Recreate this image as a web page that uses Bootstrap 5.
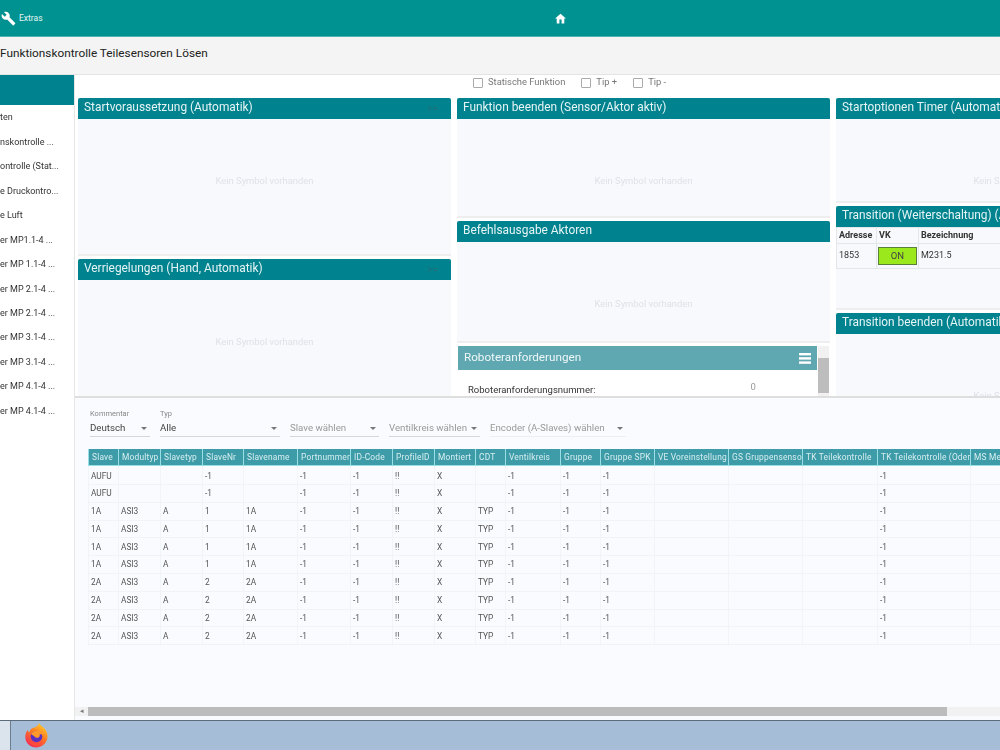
<!DOCTYPE html>
<html lang="de">
<head>
    <meta charset="UTF-8">
    <meta name="viewport" content="width=device-width, initial-scale=1">
    <title>Funktionskontrolle</title>
    <link href="https://cdn.jsdelivr.net/npm/bootstrap@5.3.0/dist/css/bootstrap.min.css" rel="stylesheet">
    <style>
        html, body {
            height: 750px;
            overflow: hidden;
        }
        body {
            font-family: Roboto, "Liberation Sans", sans-serif;
            background: #fff;
            color: #333;
            font-variant-ligatures: none;
        }
        .top-bar {
            height: 37px;
            background: #009290;
            border-bottom: 1px solid #4fb3b1;
            color: #e4f4f3;
            font-size: 8.5px;
        }
        .top-left {
            width: 500px;
            padding-left: 1px;
            gap: 3px;
        }
        .home-wrap {
            width: 121px;
            text-align: center;
        }
        .title-bar {
            height: 38px;
            background: #f4f4f4;
            border-bottom: 1px solid #e4e4e4;
            font-size: 11.8px;
            color: #222;
            padding-bottom: 4px;
        }
        .page-body {
            height: 645px;
            will-change: transform;
        }
        .side-col {
            width: 75px;
            flex-shrink: 0;
            border-right: 1px solid #e6e6e6;
            overflow: hidden;
        }
        .side-head {
            height: 30px;
            background: #00838f;
            margin-bottom: 1px;
        }
        .side-item {
            height: 24.45px;
            font-size: 9px;
            white-space: nowrap;
            color: #333;
        }
        .main-col {
            min-width: 0;
            flex: 1;
        }
        .upper-area {
            height: 323px;
            overflow: hidden;
            border-bottom: 2px solid #dedede;
        }
        .check-row {
            height: 23px;
            padding: 0 0 8px 398px;
            font-size: 9.4px;
            color: #777;
        }
        .check-row .form-check-input {
            width: 10px;
            height: 10px;
            margin: 0 5px 0 0;
            border-radius: 1px;
            border-color: #aaa;
        }
        .check-row span {
            margin-right: 16px;
        }
        .panel-cols {
            padding-left: 3px;
            gap: 6px;
            width: 1200px;
        }
        .panel-col {
            width: 373px;
            flex-shrink: 0;
        }
        .tile {
            background: #f8f9fd;
            border-bottom: 2px solid #eeeeee;
            margin-bottom: 3px;
            overflow: hidden;
        }
        .tile-h158 { height: 158px; }
        .tile-h120 { height: 120px; }
        .tile-h122 { height: 122px; }
        .tile-h105 { height: 105px; }
        .tile-h104 { height: 104px; }
        .tile-head {
            height: 21px;
            background: #00838f;
            color: #e6f4f5;
            font-size: 11.9px;
            padding: 0 6px 1px;
            border-radius: 2px 2px 0 0;
            white-space: nowrap;
        }
        .tile-op {
            color: #1d6f7a;
            font-size: 10px;
            margin-right: 7px;
        }
        .no-symbol {
            color: #dfe1e6;
            font-size: 9.4px;
            line-height: 12px;
            padding-top: 56px;
            text-align: center;
        }
        .robot-tile {
            background: #fff;
            height: 51px;
            overflow: hidden;
        }
        .robot-main {
            width: 359px;
            margin-left: 1px;
        }
        .robot-head {
            height: 24px;
            background: #60a8b1;
            color: #eef7f8;
            font-size: 11.7px;
            padding: 0 6px;
        }
        .robot-row {
            font-size: 9.5px;
            color: #333;
            padding: 13px 0 0 10px;
        }
        .robot-val {
            margin-left: 155px;
            margin-top: -3px;
            color: #999;
        }
        .robot-scroll {
            width: 11px;
            margin-left: 1px;
            background: #f1f1f1;
            padding-top: 12px;
        }
        .robot-thumb {
            height: 35px;
            background: #bdbdbd;
        }
        .vk-table {
            table-layout: fixed;
            width: 373px;
            margin: 0;
            font-size: 9px;
            --bs-table-bg: transparent;
            color: #333;
        }
        .vk-table th, .vk-table td {
            padding: 0 2px;
            border: 1px solid #e4e7ea;
            vertical-align: middle;
        }
        .vk-table th { height: 16px; font-weight: 700; }
        .vk-table td { height: 25px; }
        .vk-adr { width: 40px; }
        .vk-state { width: 42px; }
        .vk-on {
            background: #9be81d;
            border: 1px solid #58803a;
            color: #444;
            font-size: 9.5px;
            height: 18px;
            width: 39px;
            line-height: 16px;
            text-align: center;
            margin-left: -1px;
        }
        .lower-area {
            height: 322px;
            background: #fafbfe;
            overflow: hidden;
        }
        .filter-row {
            padding: 10px 0 0 15px;
            gap: 10px;
            height: 50px;
        }
        .filter-box {
            flex-shrink: 0;
        }
        .filter-label {
            font-size: 7.5px;
            height: 12px;
            line-height: 12px;
            color: #888;
        }
        .filter-sel {
            height: 17px;
            font-size: 9.7px;
            color: #444;
            white-space: nowrap;
            border-bottom: 1px solid #d6d6d6;
        }
        .filter-off { color: #999; }
        .filter-none { border-bottom-color: #eeeeee; }
        .caret-down {
            width: 0;
            height: 0;
            border-left: 3px solid transparent;
            border-right: 3px solid transparent;
            border-top: 3px solid #777;
            margin-right: 3px;
        }
        .f-w60 { width: 60px; }
        .f-w120 { width: 120px; }
        .f-w89 { width: 89px; }
        .f-w91 { width: 91px; }
        .f-w136 { width: 136px; }
        .data-wrap {
            padding: 1px 0 0 13px;
            height: 259px;
            overflow: hidden;
        }
        .data-table {
            table-layout: fixed;
            border-collapse: separate;
            border-spacing: 0;
            font-size: 8.3px;
            margin: 0;
            --bs-table-bg: transparent;
        }
        .data-table th {
            background: #3d9ca8;
            color: #d8eef0;
            font-weight: 400;
            font-size: 8.4px;
            height: 17px;
            padding: 0 1px 0 3px;
            vertical-align: middle;
            border-left: 1px solid #9adfe4;
            border-bottom: 1px solid #9adfe4;
            overflow: hidden;
            white-space: nowrap;
            letter-spacing: .2px;
        }
        .data-table td {
            height: 17.8px;
            padding: 0 2px;
            vertical-align: middle;
            color: #555;
            border-left: 1px solid #f2f5f8;
            border-bottom: 1px solid #f0f3f7;
            white-space: nowrap;
            overflow: hidden;
        }
        .data-table tbody tr:first-child td {
            height: 19px;
            padding-top: 2px;
        }
        .h-scroll {
            height: 9px;
            background: #f1f1f1;
        }
        .h-arrow {
            width: 13px;
            font-size: 7px;
            color: #777;
            line-height: 9px;
            text-align: center;
        }
        .h-thumb {
            width: 859px;
            background: #bcbcbc;
        }
        .task-bar {
            height: 30px;
            background: #a6bdd8;
            border-top: 1px solid #5c6b7c;
        }
        .task-start {
            width: 11px;
            background: #dbe3ec;
            border-right: 1px solid #6d7d8f;
        }
        .task-fox {
            margin-left: 13px;
            margin-top: 1px;
        }
    </style>
</head>
<body>

    <!-- Top bar -->
    <div class="top-bar d-flex align-items-center">
        <div class="top-left d-flex align-items-center">
            <svg width="15" height="15" viewBox="0 0 24 24" fill="#fff"><path d="M22.7 19l-9.1-9.1c.9-2.3.4-5-1.5-6.9-2-2-5-2.4-7.4-1.3L9 6 6 9 1.600 4.700C.4 7.100.9 10.100 2.900 12.100c1.900 1.900 4.600 2.400 6.900 1.500l9.100 9.100c.4.400 1 .4 1.400 0l2.300-2.300c.5-.4.500-1.100.1-1.400z"/></svg>
            <span>Extras</span>
        </div>
        <div class="home-wrap">
            <svg width="13" height="13" viewBox="0 0 24 24" fill="#fff"><path d="M10 21v-7h4v7h5v-9h3L12 3 2 12h3v9z"/></svg>
        </div>
    </div>

    <!-- Title -->
    <div class="title-bar d-flex align-items-center">Funktionskontrolle Teilesensoren Lösen</div>

    <div class="page-body d-flex">
        <!-- Sidebar -->
        <div class="side-col">
            <div class="side-head"></div>
            <div id="sideList"></div>
        </div>

        <div class="main-col">
            <div class="upper-area">
                <div class="check-row d-flex align-items-center">
                    <input class="form-check-input" type="checkbox"><span>Statische Funktion</span>
                    <input class="form-check-input" type="checkbox"><span>Tip +</span>
                    <input class="form-check-input" type="checkbox"><span>Tip -</span>
                </div>

                <div class="panel-cols d-flex">
                    <div class="panel-col">
                        <div class="tile tile-h158">
                            <div class="tile-head d-flex align-items-center justify-content-between"><span>Startvoraussetzung (Automatik)</span><span class="tile-op">&gt;=</span></div>
                            <div class="no-symbol">Kein Symbol vorhanden</div>
                        </div>
                        <div class="tile tile-h158">
                            <div class="tile-head d-flex align-items-center justify-content-between"><span>Verriegelungen (Hand, Automatik)</span><span class="tile-op">&gt;=</span></div>
                            <div class="no-symbol">Kein Symbol vorhanden</div>
                        </div>
                    </div>

                    <div class="panel-col">
                        <div class="tile tile-h120">
                            <div class="tile-head d-flex align-items-center">Funktion beenden (Sensor/Aktor aktiv)</div>
                            <div class="no-symbol">Kein Symbol vorhanden</div>
                        </div>
                        <div class="tile tile-h122">
                            <div class="tile-head d-flex align-items-center">Befehlsausgabe Aktoren</div>
                            <div class="no-symbol">Kein Symbol vorhanden</div>
                        </div>
                        <div class="robot-tile d-flex">
                            <div class="robot-main">
                                <div class="robot-head d-flex align-items-center justify-content-between">
                                    <span>Roboteranforderungen</span>
                                    <svg width="12" height="11" viewBox="0 0 12 11" fill="#fff"><rect y="0" width="12" height="2.400"/><rect y="4.200" width="12" height="2.400"/><rect y="8.400" width="12" height="2.400"/></svg>
                                </div>
                                <div class="robot-row d-flex">
                                    <span>Roboteranforderungsnummer:</span>
                                    <span class="robot-val">0</span>
                                </div>
                            </div>
                            <div class="robot-scroll"><div class="robot-thumb"></div></div>
                        </div>
                    </div>

                    <div class="panel-col">
                        <div class="tile tile-h105">
                            <div class="tile-head d-flex align-items-center">Startoptionen Timer (Automatik)</div>
                            <div class="no-symbol">Kein Symbol vorhanden</div>
                        </div>
                        <div class="tile tile-h104">
                            <div class="tile-head d-flex align-items-center">Transition (Weiterschaltung) (Automatik)</div>
                            <table class="table vk-table">
                                <thead>
                                    <tr><th class="vk-adr">Adresse</th><th class="vk-state">VK</th><th>Bezeichnung</th></tr>
                                </thead>
                                <tbody>
                                    <tr><td>1853</td><td><div class="vk-on">ON</div></td><td>M231.5</td></tr>
                                </tbody>
                            </table>
                        </div>
                        <div class="tile">
                            <div class="tile-head d-flex align-items-center">Transition beenden (Automatik)</div>
                            <div class="no-symbol">Kein Symbol vorhanden</div>
                        </div>
                    </div>
                </div>
            </div>

            <div class="lower-area">
                <div class="filter-row d-flex">
                    <div class="filter-box f-w60">
                        <div class="filter-label">Kommentar</div>
                        <div class="filter-sel d-flex align-items-center justify-content-between">Deutsch<span class="caret-down"></span></div>
                    </div>
                    <div class="filter-box f-w120">
                        <div class="filter-label">Typ</div>
                        <div class="filter-sel d-flex align-items-center justify-content-between">Alle<span class="caret-down"></span></div>
                    </div>
                    <div class="filter-box f-w89">
                        <div class="filter-label"></div>
                        <div class="filter-sel filter-off d-flex align-items-center justify-content-between">Slave wählen<span class="caret-down"></span></div>
                    </div>
                    <div class="filter-box f-w91">
                        <div class="filter-label"></div>
                        <div class="filter-sel filter-off d-flex align-items-center justify-content-between">Ventilkreis wählen<span class="caret-down"></span></div>
                    </div>
                    <div class="filter-box f-w136">
                        <div class="filter-label"></div>
                        <div class="filter-sel filter-off filter-none d-flex align-items-center justify-content-between">Encoder (A-Slaves) wählen<span class="caret-down"></span></div>
                    </div>
                </div>
                <div class="data-wrap">
                    <table class="table data-table" id="dataTable"></table>
                </div>
                <div class="h-scroll d-flex">
                    <div class="h-arrow">◂</div>
                    <div class="h-thumb"></div>
                </div>
            </div>
        </div>
    </div>

    <!-- Taskbar -->
    <div class="task-bar d-flex">
        <div class="task-start"></div>
        <div class="task-fox">
            <svg width="25" height="27" viewBox="0 0 25 27">
                <defs>
                    <linearGradient id="foxOuter" x1="0.8" y1="0" x2="0.2" y2="1">
                        <stop offset="0" stop-color="#ffd52e"/>
                        <stop offset="0.45" stop-color="#ff7a1f"/>
                        <stop offset="1" stop-color="#f0245c"/>
                    </linearGradient>
                </defs>
                <path d="M15 1c1 2.500 4 3.500 5.500 5.500 3 3.500 3.500 7 2.800 10-1.200 5.500-5.800 9-11 9-6 0-11-4.500-11-10.500 0-3 1-5.500 2.500-7 .2 1.200.7 2 1.500 2.500C6 7 8.500 5.500 11 5.500c1.500-1 3.500-2.500 4-4.500z" fill="url(#foxOuter)"/>
                <circle cx="12.500" cy="14.500" r="5.800" fill="#5b2fc0"/>
                <path d="M7 12c2-3 6-4 9-2.500 1.500.8 2.500 2 3 3.200-1.200-.7-2.500-.7-3.500-.2.500 1 .3 2-.5 2.700-1.500 1-3.500.7-4.300-.5-.7-.9-2.200-1.700-3.700-2.700z" fill="#ff9a2a"/>
                <path d="M5 17c1.500 3.500 5 5.200 8.500 4.700 2.500-.4 4.500-2 5.500-4-1 4-4 6.300-7.500 6.100C8 23.600 5.500 20.800 5 17z" fill="#ff4d3a"/>
            </svg>
        </div>
    </div>

    <script>
        // Sidebar entries, cut off on the left as in the scrolled page
        const sideItems = [
            "ten", "nskontrolle ...", "ontrolle (Stat...", "e Druckontro...", "e Luft",
            "er MP1.1-4 ...", "er MP 1.1-4 ...", "er MP 2.1-4 ...", "er MP 2.1-4 ...",
            "er MP 3.1-4 ...", "er MP 3.1-4 ...", "er MP 4.1-4 ...", "er MP 4.1-4 ..."
        ];
        document.getElementById("sideList").innerHTML = sideItems
            .map(text => `<div class="side-item d-flex align-items-center">${text}</div>`)
            .join("");

        // Slave table
        const columns = [
            ["Slave", 30], ["Modultyp", 42], ["Slavetyp", 42], ["SlaveNr", 41], ["Slavename", 54],
            ["Portnummer", 53], ["ID-Code", 42], ["ProfileID", 42], ["Montiert", 41], ["CDT", 30],
            ["Ventilkreis", 55], ["Gruppe", 40], ["Gruppe SPK", 54], ["VE Voreinstellung", 74],
            ["GS Gruppensensor", 74], ["TK Teilekontrolle", 75], ["TK Teilekontrolle (Oder)", 93], ["MS Messung", 90]
        ];
        const rows = [
            ["AUFU", "", "", "-1", ""], ["AUFU", "", "", "-1", ""],
            ["1A", "ASI3", "A", "1", "1A"], ["1A", "ASI3", "A", "1", "1A"],
            ["1A", "ASI3", "A", "1", "1A"], ["1A", "ASI3", "A", "1", "1A"],
            ["2A", "ASI3", "A", "2", "2A"], ["2A", "ASI3", "A", "2", "2A"],
            ["2A", "ASI3", "A", "2", "2A"], ["2A", "ASI3", "A", "2", "2A"]
        ];
        const totalWidth = columns.reduce((sum, col) => sum + col[1], 0);
        const table = document.getElementById("dataTable");
        table.style.width = totalWidth + "px";

        let html = "<thead><tr>" + columns
            .map(col => `<th style="width:${col[1]}px">${col[0]}</th>`)
            .join("") + "</tr></thead><tbody>";
        rows.forEach(row => {
            const cdt = row[1] ? "TYP" : "";
            const cells = [...row, "-1", "-1", "!!", "X", cdt, "-1", "-1", "-1", "", "", "", "-1", ""];
            html += "<tr>" + cells.map(cell => `<td>${cell}</td>`).join("") + "</tr>";
        });
        table.innerHTML = html + "</tbody>";
    </script>
    <script src="https://cdn.jsdelivr.net/npm/bootstrap@5.3.0/dist/js/bootstrap.bundle.min.js"></script>
</body>
</html>
